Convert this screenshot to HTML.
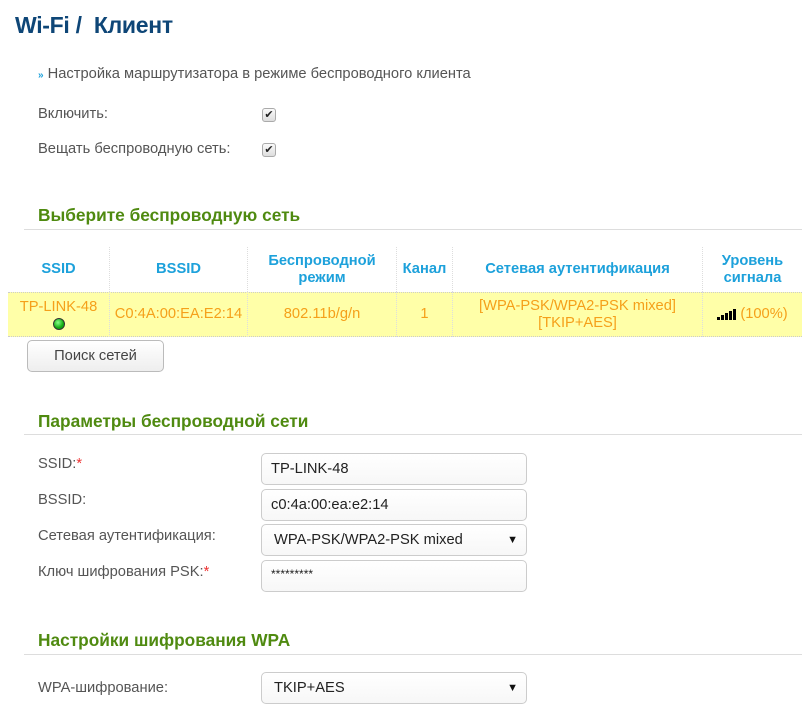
<!DOCTYPE html>
<html><head><meta charset="utf-8"><style>
*{margin:0;padding:0;box-sizing:border-box}
body{width:802px;height:717px;overflow:hidden;background:#fff;font-family:"Liberation Sans",Arial,sans-serif;position:relative;color:#555}
.a{position:absolute;white-space:nowrap}
h1{position:absolute;left:15px;top:12px;font-size:23px;color:#0e4677;font-weight:bold;letter-spacing:-0.3px}
.t{font-size:14.7px;color:#555}
.sec{position:absolute;left:38px;font-size:17.3px;font-weight:bold;color:#4f8a10}
.line{position:absolute;left:24px;right:0;height:1px;background:#ddd}
.cb{position:absolute;width:14px;height:14px;border:1px solid #aaa;border-radius:3px;background:linear-gradient(#fafafa,#ddd);font-size:11px;line-height:12px;text-align:center;color:#222}
.th{position:absolute;top:247px;height:45px;display:flex;align-items:center;justify-content:center;text-align:center;font-size:14.7px;font-weight:bold;color:#1da1db;line-height:17px;border-right:1px dotted #ddd}
.td{position:absolute;top:292px;height:45px;display:flex;align-items:center;justify-content:center;text-align:center;font-size:14.7px;color:#f5a01a;line-height:17px;border-right:1px dotted #ddd}
.inp{position:absolute;left:261px;width:266px;height:32px;border:1px solid #ccc;border-radius:5px;background:linear-gradient(#fff,#f7f7f7);font-size:14.7px;color:#222;padding-left:9px;line-height:30px}
.arr{position:absolute;right:8px;top:0;font-size:11px;color:#111}
.req{color:#e33}
</style></head><body>
<h1>Wi-Fi /&nbsp; Клиент</h1>
<div class="a t" style="left:38px;top:66px"><span style="color:#1da1db;font-size:10px;font-weight:bold">»</span> Настройка маршрутизатора в режиме беспроводного клиента</div>
<div class="a t" style="left:38px;top:106px">Включить:</div>
<div class="cb" style="left:262px;top:108px">✔</div>
<div class="a t" style="left:38px;top:141px">Вещать беспроводную сеть:</div>
<div class="cb" style="left:262px;top:143px">✔</div>

<div class="sec" style="top:205px">Выберите беспроводную сеть</div>
<div class="line" style="top:229px"></div>

<div style="position:absolute;left:8px;right:0;top:292px;height:45px;background:#ffffa8;border-top:1px dotted #ccc;border-bottom:1px dotted #ccc"></div>
<div class="th" style="left:8px;width:102px">SSID</div>
<div class="th" style="left:110px;width:138px">BSSID</div>
<div class="th" style="left:248px;width:149px">Беспроводной<br>режим</div>
<div class="th" style="left:397px;width:56px">Канал</div>
<div class="th" style="left:453px;width:250px">Сетевая аутентификация</div>
<div class="th" style="left:703px;width:99px;border:0">Уровень<br>сигнала</div>
<div class="td" style="left:8px;width:102px;flex-direction:column;justify-content:flex-start;padding-top:7px">TP-LINK-48<span style="display:block;width:12px;height:12px;border-radius:50%;background:radial-gradient(circle at 40% 35%,#8f8,#1a1 60%);border:1px solid #333;margin-top:2px"></span></div>
<div class="td" style="left:110px;width:138px">C0:4A:00:EA:E2:14</div>
<div class="td" style="left:248px;width:149px">802.11b/g/n</div>
<div class="td" style="left:397px;width:56px">1</div>
<div class="td" style="left:453px;width:250px">[WPA-PSK/WPA2-PSK mixed]<br>[TKIP+AES]</div>
<div class="td" style="left:703px;width:99px;border:0"><svg width="19" height="11" viewBox="0 0 19 11" style="margin-right:4px"><rect x="0" y="8" width="3" height="3" fill="#000"/><rect x="4" y="6" width="3" height="5" fill="#000"/><rect x="8" y="4" width="3" height="7" fill="#000"/><rect x="12" y="2" width="3" height="9" fill="#000"/><rect x="16" y="0" width="3" height="11" fill="#000"/></svg>(100%)</div>

<div class="a" style="left:27px;top:340px;width:137px;height:32px;border:1px solid #bbb;border-radius:5px;background:linear-gradient(#fff,#eee);font-size:14.7px;color:#444;text-align:center;line-height:30px">Поиск сетей</div>

<div class="sec" style="top:411px">Параметры беспроводной сети</div>
<div class="line" style="top:434px"></div>
<div class="a t" style="left:38px;top:456px">SSID:<span class="req">*</span></div>
<div class="inp" style="top:453px">TP-LINK-48</div>
<div class="a t" style="left:38px;top:492px">BSSID:</div>
<div class="inp" style="top:489px">c0:4a:00:ea:e2:14</div>
<div class="a t" style="left:38px;top:528px">Сетевая аутентификация:</div>
<div class="inp" style="top:524px;padding-left:12px">WPA-PSK/WPA2-PSK mixed<span class="arr">▼</span></div>
<div class="a t" style="left:38px;top:564px">Ключ шифрования PSK:<span class="req">*</span></div>
<div class="inp" style="top:560px;font-size:12px;line-height:26px">*********</div>

<div class="sec" style="top:630px">Настройки шифрования WPA</div>
<div class="line" style="top:654px"></div>
<div class="a t" style="left:38px;top:680px">WPA-шифрование:</div>
<div class="inp" style="top:672px;padding-left:12px">TKIP+AES<span class="arr">▼</span></div>
</body></html>
